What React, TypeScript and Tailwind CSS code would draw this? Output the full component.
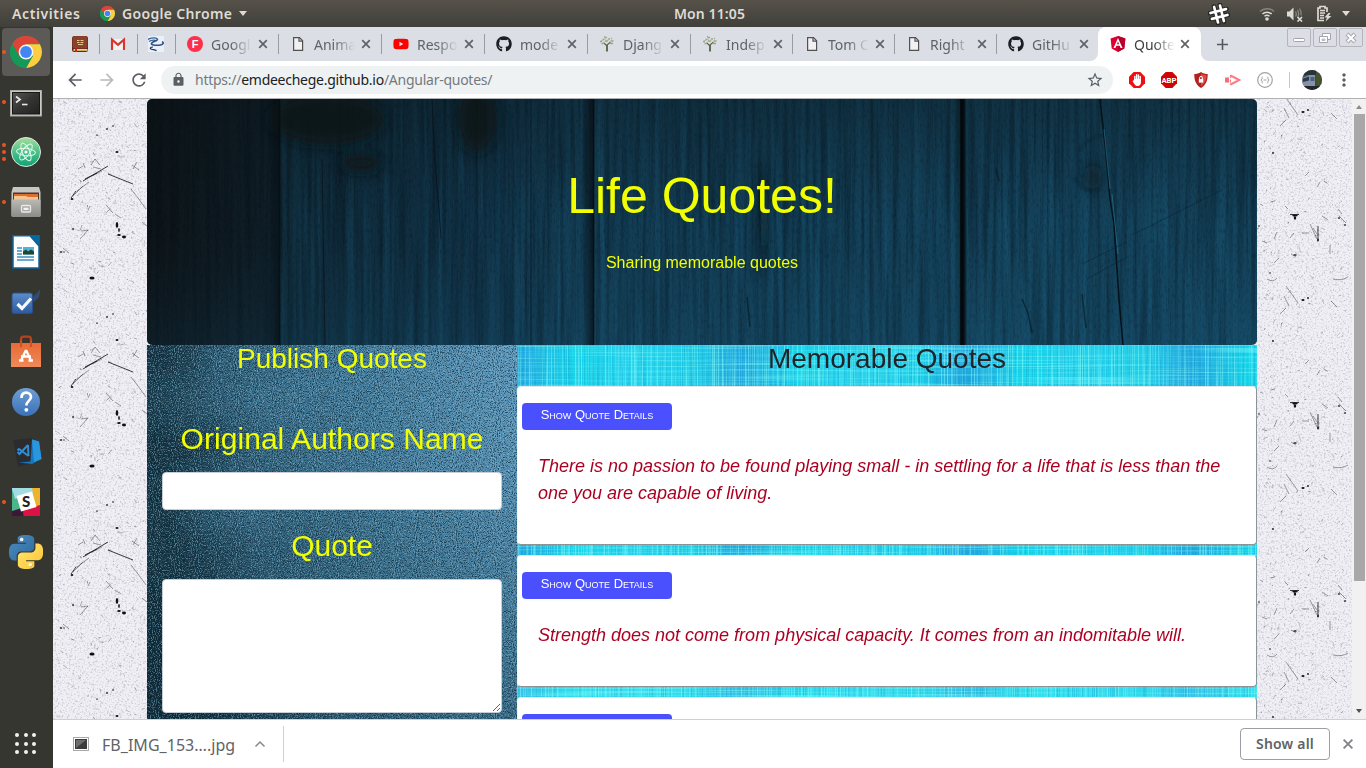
import React from "react";
import { FaGithub, FaYoutube } from "react-icons/fa";
import {
  MdAdd,
  MdArrowBack,
  MdArrowForward,
  MdLock,
  MdMoreVert,
  MdRefresh,
  MdStarBorder,
} from "react-icons/md";

/* ---------- small drawings ---------- */

function CloseIcon({ size, color }: { size: number; color: string }) {
  return (
    <svg width={size} height={size} viewBox="0 0 14 14" className="shrink-0">
      <path d="M3.200 3.200l7.600 7.600M10.800 3.200l-7.600 7.600" stroke={color} strokeWidth="1.700" fill="none" />
    </svg>
  );
}

function ChromeLogo({ size }: { size: number }) {
  return (
    <svg width={size} height={size} viewBox="0 0 32 32">
      <circle cx="16" cy="16" r="16" fill="#159957" />
      <path d="M16 16 L9.2 20 L2.1 8 A16 16 0 0 1 29.9 8 L16 8.2 Z" fill="#db4437" />
      <path d="M16 8.2 H29.9 A16 16 0 0 1 16 32 L22.8 20 Z" fill="#ffcd40" />
      <path d="M2.1 8 A16 16 0 0 0 16 32 L22.8 20 H9.2 Z" fill="#159957" />
      <circle cx="16" cy="16" r="7.4" fill="#f4f4f4" />
      <circle cx="16" cy="16" r="5.9" fill="#4285f4" />
    </svg>
  );
}

function BookIcon() {
  return (
    <svg width="16" height="16" viewBox="0 0 16 16">
      <rect x="0" y="0" width="16" height="16" rx="2.5" fill="#5f2617" />
      <rect x="0.5" y="0" width="15" height="12.5" rx="2" fill="#8a402a" />
      <path d="M1.5 13h14v1.800h-14z" fill="#e9d77a" />
      <path d="M3 12.500h2V16H3z" fill="#e21b1b" />
      <path d="M5 4.500h2.500M8.500 4.500h3M5 6.500h2.500M8.500 6.500h3M6 8.500h5" stroke="#e2c98e" strokeWidth="1.2" />
    </svg>
  );
}

function GmailIcon() {
  return (
    <svg width="16" height="16" viewBox="0 0 16 16">
      <path d="M1 3h14v11H1z" fill="#f3f1f1" />
      <path d="M2 14V3.600L8 8.800l6-5.200V14" fill="none" stroke="#d9352b" strokeWidth="2.1" />
    </svg>
  );
}

function SwirlIcon() {
  return (
    <svg width="16" height="16" viewBox="0 0 16 16">
      <rect width="16" height="16" fill="#eaf0fa" />
      <path d="M0 3.300C4 1.500 7 1.200 9.500 2.800M1 5.500c3-2 6-1.500 8-.5" fill="none" stroke="#37618f" strokeWidth="1.300" />
      <path d="M9.500 3C10 5 4 5.500 3.500 7.500s6 2 9 1.500 3.500-2.500 1.500-3.200" fill="none" stroke="#2c5282" strokeWidth="1.600" />
      <path d="M5 11c-3 0-3.500 1.700-1.500 2.300s3.500.3 5 1.500" fill="none" stroke="#17375f" strokeWidth="1.200" />
    </svg>
  );
}

function FIcon() {
  return (
    <svg width="16" height="16" viewBox="0 0 16 16">
      <circle cx="8" cy="8" r="8" fill="#fd2f4b" />
      <text x="8" y="12" textAnchor="middle" fontFamily="Liberation Sans, sans-serif" fontWeight="700" fontSize="11" fill="#fff">F</text>
    </svg>
  );
}

function PageIcon() {
  return (
    <svg width="16" height="16" viewBox="0 0 16 16">
      <path d="M3.600 1.600H9.500L12.600 4.800V14.400H3.600z" fill="#f1f1f3" stroke="#525252" strokeWidth="1.200" />
      <path d="M9 1.500V5.200h3.700" fill="none" stroke="#525252" strokeWidth="1.200" />
    </svg>
  );
}

function TreeIcon() {
  return (
    <svg width="16" height="16" viewBox="0 0 16 16">
      <path d="M7.600 15.500V8.500M8.400 15.500V8.500M8 10L4.500 6.500M8 9l3.500-3" stroke="#5c6748" strokeWidth="1.100" fill="none" />
      <path d="M1 5.500h2M3.500 3.500h2M6 1.500h2M9 3h2M11.500 5h3M6 5h3M2.500 7.500h2M11 7.500h3M5 .8h1M12 2.500h1" stroke="#9aa884" strokeWidth="1.500" fill="none" />
      <path d="M2 4.500h2M5 3h2M8 4h2M11 6h2M4 6.300h2" stroke="#b5bda4" strokeWidth="1.200" fill="none" />
    </svg>
  );
}

function AngularIcon() {
  return (
    <svg width="16" height="16" viewBox="0 0 16 16">
      <path d="M8 0l7.400 2.600-1.100 9.800L8 16l-6.300-3.600L.6 2.600z" fill="#dd0031" />
      <path d="M8 0v16l6.300-3.600 1.100-9.800z" fill="#b9002d" />
      <path d="M8 2L3.500 12h1.900l.9-2.200h3.400l.9 2.200h1.900zM8 5.500l1.100 2.700H6.900z" fill="#fff" fillRule="evenodd" />
    </svg>
  );
}

function HashIcon() {
  return (
    <svg width="22" height="22" viewBox="0 0 22 22">
      <g transform="rotate(-14 11 11)" strokeLinecap="round" fill="none">
        <path d="M8 2.500v17M14 2.500v17M2.500 8h17M2.500 14h17" stroke="#252522" strokeWidth="4.600" />
        <path d="M8 3v16M14 3v16M3 8h16M3 14h16" stroke="#fff" strokeWidth="2.700" />
      </g>
    </svg>
  );
}

function WifiIcon() {
  return (
    <svg width="16" height="16" viewBox="0 0 16 16">
      <g fill="none" strokeWidth="1.500">
        <path d="M1 5.500a10 10 0 0 1 14 0" stroke="#87857d" />
        <path d="M3.400 8a6.600 6.600 0 0 1 9.200 0M5.500 10.300a3.800 3.800 0 0 1 5 0" stroke="#dedbd2" />
      </g>
      <circle cx="8" cy="13" r="1.800" fill="#dedbd2" />
    </svg>
  );
}

function SpeakerIcon() {
  return (
    <svg width="18" height="16" viewBox="0 0 18 16">
      <path d="M1 5.500h2.500L7.500 1.500v13L3.500 10.500H1z" fill="#dedbd2" />
      <path d="M9.500 5.500c1 1.500 1 3.500 0 5M11.500 4c1.500 2.500 1.500 5 0 7M13.500 2.500c2 3 2 5 1.500 7" fill="none" stroke="#8e8c84" strokeWidth="1.200" />
      <path d="M11.500 11l4.500 4.500M16 11l-4.500 4.500" stroke="#dedbd2" strokeWidth="1.700" />
    </svg>
  );
}

function BatteryIcon() {
  return (
    <svg width="16" height="17" viewBox="0 0 16 17">
      <path d="M8 15.500H2V3h2V1.500h5V3h2v4" fill="none" stroke="#dedbd2" strokeWidth="1.700" />
      <path d="M4 5.500h5M4 8h5M4 10.500h4M4 13h4" stroke="#dedbd2" strokeWidth="1.500" />
      <path d="M12.500 8L8.500 12.500h2.500L9.500 16.500 15.500 11h-3l2-3z" fill="#dedbd2" />
    </svg>
  );
}

function HandIcon() {
  return (
    <svg width="16" height="16" viewBox="0 0 16 16">
      <path d="M4.700 0h6.600L16 4.700v6.600L11.300 16H4.700L0 11.300V4.700z" fill="#ef0f12" />
      <path d="M5.800 9V4.500M7.600 8V2.800M9.400 8V3M11.200 9V4.500" stroke="#fff" strokeWidth="1.400" strokeLinecap="round" />
      <path d="M5.100 7h6.800v3.500c0 2-1 3-2.500 3.500H7.500C6 13.500 4.500 11 3.500 9l1-.5z" fill="#fff" />
    </svg>
  );
}

function AbpIcon() {
  return (
    <svg width="16" height="16" viewBox="0 0 16 16">
      <path d="M4.700 0h6.600L16 4.700v6.600L11.300 16H4.700L0 11.300V4.700z" fill="#cf0505" />
      <text x="8" y="11" textAnchor="middle" fontFamily="Roboto, sans-serif" fontWeight="700" fontSize="7.800" fill="#fff">ABP</text>
    </svg>
  );
}

function ShieldIcon() {
  return (
    <svg width="14" height="16" viewBox="0 0 14 16">
      <path d="M7 0c2 1.500 4.500 2 6.700 2 0 6-1.200 10.500-6.700 14C1.500 12.500.3 8 .3 2 2.500 2 5 1.500 7 0z" fill="#b3201f" />
      <path d="M7 1.500c2 1 3.500 1.500 5.500 1.700C12.300 8 11 11.500 7 14.300z" fill="#dc4a45" />
      <path d="M4.800 7h4.400v3.600H4.800z" fill="#fff" />
      <path d="M5.600 7V5.800a1.400 1.400 0 0 1 2.800 0V7" fill="none" stroke="#fff" strokeWidth="1" />
    </svg>
  );
}

function CastIcon() {
  return (
    <svg width="16" height="14" viewBox="0 0 16 14">
      <path d="M0 4.500h4v5H0z" fill="#fb6a75" />
      <path d="M5.500 2.500l9 4.500-9 4.500" fill="none" stroke="#fb7b84" strokeWidth="2" />
      <path d="M5.500 2v10" stroke="#fb7b84" strokeWidth="1.200" strokeDasharray="3 1.500" />
    </svg>
  );
}

function BracesIcon() {
  return (
    <svg width="16" height="16" viewBox="0 0 16 16" fill="none" stroke="#a2a2a2">
      <circle cx="8" cy="8" r="7.300" strokeWidth="1.200" />
      <path d="M6 5c-1.300 0-1 .8-1 1.700S4.500 8 3.800 8c.7 0 1.200.4 1.200 1.300S4.700 11 6 11M10 5c1.300 0 1 .8 1 1.700S11.500 8 12.200 8c-.7 0-1.200.4-1.200 1.300s.3 1.700-1 1.700M6.500 8h3" />
    </svg>
  );
}

function AvatarIcon() {
  return (
    <svg width="20" height="20" viewBox="0 0 20 20">
      <defs>
        <clipPath id="avatarClip"><circle cx="10" cy="10" r="10" /></clipPath>
      </defs>
      <g clipPath="url(#avatarClip)">
        <rect width="20" height="20" fill="#3d4b3f" />
        <path d="M0 0h14v5H0z" fill="#27343a" />
        <path d="M0 8l7-3h6v12H1z" fill="#8593a8" />
        <path d="M1 8.500l6-2v4L1 12z" fill="#2c3b50" />
        <path d="M8.500 7h4v4h-4z" fill="#4d6079" />
        <path d="M14 3h6v12h-6z" fill="#46532e" />
        <path d="M0 16h20v4H0z" fill="#23262a" />
      </g>
    </svg>
  );
}

/* ---------- dock icons ---------- */

function TerminalIcon() {
  return (
    <svg width="34" height="30" viewBox="0 0 34 30" className="relative top-px">
      <defs>
        <linearGradient id="term" x1="0" y1="0" x2="1" y2="1">
          <stop offset="0" stopColor="#565654" /><stop offset=".5" stopColor="#343433" /><stop offset="1" stopColor="#222" />
        </linearGradient>
      </defs>
      <rect x="1.500" y="2.500" width="31" height="25.500" fill="#c9c9c7" stroke="#a8a8a4" />
      <rect x="3.500" y="4.500" width="27" height="21.500" fill="url(#term)" stroke="#171717" />
      <path d="M7 8.500l4 3-4 3" fill="none" stroke="#e9e9e9" strokeWidth="1.700" />
      <path d="M13 16.500h5.500" stroke="#e9e9e9" strokeWidth="1.600" />
    </svg>
  );
}

function AtomIcon() {
  return (
    <svg width="32" height="32" viewBox="0 0 32 32">
      <defs>
        <linearGradient id="atomg" x1="0" y1="0" x2="0" y2="1">
          <stop offset="0" stopColor="#a6dd9d" /><stop offset=".5" stopColor="#4cc08a" /><stop offset="1" stopColor="#0da477" />
        </linearGradient>
      </defs>
      <circle cx="16" cy="16" r="14.500" fill="url(#atomg)" stroke="#dfeadd" strokeWidth="1" />
      <g fill="none" stroke="#e6f8ed" strokeWidth="1">
        <ellipse cx="16" cy="16" rx="9.500" ry="3.700" transform="rotate(6 16 16)" />
        <ellipse cx="16" cy="16" rx="9.500" ry="3.700" transform="rotate(66 16 16)" />
        <ellipse cx="16" cy="16" rx="9.500" ry="3.700" transform="rotate(126 16 16)" />
      </g>
      <circle cx="16" cy="16" r="1.600" fill="#fff" />
    </svg>
  );
}

function FilesIcon() {
  return (
    <svg width="32" height="34" viewBox="0 0 32 34">
      <defs>
        <linearGradient id="filesg" x1="0" y1="0" x2="0" y2="1">
          <stop offset="0" stopColor="#b9b9b6" /><stop offset="1" stopColor="#8b8b88" />
        </linearGradient>
      </defs>
      <path d="M3 2h26l1.500 5v24h-29V7z" fill="#c6c6c3" />
      <rect x="3" y="7.500" width="26" height="8" fill="#4a3a2e" />
      <path d="M4 9h24v7H4z" fill="#e06c2f" />
      <path d="M4 11h12l2 1h10v4H4z" fill="#f6c594" />
      <rect x="1.500" y="14.500" width="29" height="17.500" rx="1" fill="url(#filesg)" />
      <rect x="11.500" y="20.500" width="9" height="6.500" rx="1" fill="#a8a8a5" stroke="#e9e9e9" strokeWidth="1.300" />
      <rect x="13.500" y="22.700" width="5" height="2.300" fill="#f3f3f3" />
    </svg>
  );
}

function WriterIcon() {
  return (
    <svg width="28" height="34" viewBox="0 0 28 34">
      <path d="M1 .8h17L27 11v22H1z" fill="#fdfdfd" stroke="#0e639c" strokeWidth="1.500" />
      <path d="M17.500 0h10.300v10.500z" fill="#0369a3" />
      <path d="M5 13h5M5 16h5M5 19h5M5 22h17M5 25h17" stroke="#3c8fc0" strokeWidth="1.600" />
      <rect x="11" y="12" width="11" height="7.500" fill="#4fb3e0" />
      <path d="M11 19.500v-3l3-2 2 2 3-2 3 2v3z" fill="#24452c" />
    </svg>
  );
}

function TaskIcon() {
  return (
    <svg width="32" height="28" viewBox="0 0 32 28">
      <defs>
        <linearGradient id="taskg" x1="0" y1="0" x2="0" y2="1">
          <stop offset="0" stopColor="#5c8cc9" /><stop offset="1" stopColor="#2d5a9e" />
        </linearGradient>
      </defs>
      <rect x="2" y="5" width="20.500" height="20.500" rx="2" fill="url(#taskg)" stroke="#27508d" />
      <path d="M22 10l8.500-9-1.500 8-5 5z" fill="#31527f" opacity=".8" />
      <path d="M7.500 16l4.500 4.500 9-10" fill="none" stroke="#f5f8fc" strokeWidth="3.200" />
    </svg>
  );
}

function SoftwareIcon() {
  return (
    <svg width="32" height="34" viewBox="0 0 32 34">
      <defs>
        <linearGradient id="softg" x1="0" y1="0" x2="0" y2="1">
          <stop offset="0" stopColor="#e86a36" /><stop offset="1" stopColor="#ef8a58" />
        </linearGradient>
      </defs>
      <path d="M11 12V4.500c0-2 1-2.800 2.500-2.800h5c1.500 0 2.500.8 2.500 2.800V12" fill="none" stroke="#b8421c" strokeWidth="2.300" />
      <path d="M1 8h30v24H1z" fill="url(#softg)" />
      <path d="M11 12V5.500M21 12V5.500" stroke="#cf5223" strokeWidth="2" />
      <g fill="none" stroke="#fff" strokeWidth="2.300">
        <path d="M16 15l-4.500 9.500M16 15l4.500 9.500M11 21.500h10" />
        <path d="M9 25.500h4.500M18.500 25.500H23" />
      </g>
    </svg>
  );
}

function HelpIcon() {
  return (
    <svg width="30" height="30" viewBox="0 0 30 30">
      <defs>
        <linearGradient id="helpg" x1="0" y1="0" x2="0" y2="1">
          <stop offset="0" stopColor="#6f9ed4" /><stop offset="1" stopColor="#3a72b8" />
        </linearGradient>
      </defs>
      <circle cx="15" cy="15" r="14" fill="url(#helpg)" />
      <path d="M10.500 11c0-3.500 2-5.300 4.700-5.300s4.800 1.700 4.800 4.400c0 3.300-4.600 4-4.600 8.400" fill="none" stroke="#fff" strokeWidth="2.700" />
      <circle cx="15.300" cy="22.800" r="1.900" fill="#fff" />
    </svg>
  );
}

function CodeIcon() {
  return (
    <svg width="32" height="32" viewBox="0 0 32 32">
      <path d="M3 4l19-2 6 24-20 4.500z" fill="#2c2c30" />
      <path d="M22 3.500l7 2 2.500 17.500-9.500 5-13-1.500 11.500-1z" fill="#1577c0" />
      <path d="M22 3.500l7 2 2.500 17.500-7.500 3z" fill="#2a96dd" />
      <path d="M18 9L9.500 18l-2-2M18.500 20L9 13l-1.500 1.500M18 9l.5 11" fill="none" stroke="#2a8fd6" strokeWidth="2" />
    </svg>
  );
}

function SlackIcon() {
  return (
    <svg width="28" height="28" viewBox="0 0 28 28">
      <rect width="28" height="28" fill="#78c6d9" />
      <path d="M0 3l5 3 5 15-10 2z" fill="#4bb68b" />
      <path d="M19 0h9v20l-8 0z" fill="#ecb32d" />
      <path d="M10 22l18-5v11H12z" fill="#dd1144" />
      <path d="M0 23l10-3 2 8H0z" fill="#3d1836" />
      <path d="M0 0h20l1 5L3 11z" fill="#a4dce4" />
      <path d="M4.500 8l15.500-4.500L24.500 19 9 23.500z" fill="#fff" />
      <text x="14.200" y="18.700" textAnchor="middle" fontFamily="Lato, sans-serif" fontWeight="900" fontSize="15" fill="#222">S</text>
    </svg>
  );
}

function PythonIcon() {
  return (
    <svg width="34" height="34" viewBox="0 0 24 24">
      <defs>
        <linearGradient id="pyb" x1="0" y1="0" x2="1" y2="1"><stop offset="0" stopColor="#4a8cc5" /><stop offset="1" stopColor="#306998" /></linearGradient>
        <linearGradient id="pyy" x1="0" y1="0" x2="1" y2="1"><stop offset="0" stopColor="#ffe873" /><stop offset="1" stopColor="#ffc331" /></linearGradient>
      </defs>
      <path fill="url(#pyb)" d="M14.250.18l.9.2.73.26.59.3.45.32.34.34.25.34.16.33.1.3.04.26.02.2-.01.13V8.500l-.05.63-.13.55-.21.46-.26.38-.3.31-.33.25-.35.19-.35.14-.33.1-.3.07-.26.04-.21.02H8.770l-.69.05-.59.14-.5.22-.41.27-.33.32-.27.35-.2.36-.15.37-.1.35-.07.32-.04.27-.02.21v3.060H3.170l-.21-.03-.28-.07-.32-.12-.35-.18-.36-.26-.36-.36-.35-.46-.32-.59-.28-.73-.21-.88-.14-1.050-.05-1.230.06-1.220.16-1.040.24-.87.32-.71.36-.57.4-.44.42-.33.42-.24.4-.16.36-.1.32-.05.24-.01h.16l.06.01h8.160v-.83H6.180l-.01-2.750-.02-.37.05-.34.11-.31.17-.28.25-.26.31-.23.38-.2.44-.18.51-.15.58-.12.64-.1.71-.06.77-.04.84-.02 1.270.05zm-6.300 1.980l-.23.33-.08.41.08.41.23.34.33.22.41.09.41-.09.33-.22.23-.34.08-.41-.08-.41-.23-.33-.33-.22-.41-.09-.41.09z" />
      <path fill="url(#pyy)" d="M21.100 6.110l.28.06.32.12.35.18.36.27.36.35.35.47.32.59.28.73.21.88.14 1.040.05 1.230-.06 1.230-.16 1.040-.24.86-.32.71-.36.57-.4.45-.42.33-.42.24-.4.16-.36.09-.32.05-.24.02-.16-.01h-8.220v.82h5.840l.01 2.760.02.36-.05.34-.11.31-.17.29-.25.25-.31.24-.38.2-.44.17-.51.15-.58.13-.64.09-.71.07-.77.04-.84.01-1.270-.04-1.070-.14-.9-.2-.73-.25-.59-.3-.45-.33-.34-.34-.25-.34-.16-.33-.1-.3-.04-.25-.02-.2.01-.13v-5.340l.05-.64.13-.54.21-.46.26-.38.3-.32.33-.24.35-.2.35-.14.33-.1.3-.06.26-.04.21-.02.13-.01h5.840l.69-.05.59-.14.5-.21.41-.28.33-.32.27-.35.2-.36.15-.36.1-.35.07-.32.04-.28.02-.21V6.070h2.090l.14.01zm-6.470 14.250l-.23.33-.08.41.08.41.23.33.33.23.41.08.41-.08.33-.23.23-.33.08-.41-.08-.41-.23-.33-.33-.23-.41-.08-.41.08z" />
      <circle cx="8.900" cy="3.100" r="1.300" fill="#e8f1f8" />
      <circle cx="15.100" cy="20.900" r="1.300" fill="#fff6d0" />
    </svg>
  );
}

/* ---------- textures ---------- */

function rng(seed: number) {
  let s = seed;
  return () => {
    s = (s * 1664525 + 1013904223) % 4294967296;
    return s / 4294967296;
  };
}

function specks(seed: number, count: number) {
  const r = rng(seed);
  return Array.from({ length: count }, () => {
    const x = r() * 94;
    const y = r() * 188;
    const a = r() * Math.PI;
    const l = 0.6 + r() * r() * r() * 9;
    return { x, y, dx: Math.cos(a) * l, dy: Math.sin(a) * l, o: 0.15 + r() * r() * 0.6 };
  });
}

const leftBold = "M18 99l5-7M30 82l15-9 10-6M32 80l12-6M55 75l25 10";
const leftMarks =
  "M20 97l10-10M24 92l12-9M39 77l10-5M78 90l7 9 8 11M53 106l7 8M62 115l6 4M27 140l8-9M28 132l7-1M10 149l6 5M89 123l5 4M80 70l4-7M79 66l7 5M38 66l4-6 5 6M40 68l8 2M25 70l5-3M30 64l2 5M35 111l2-4";
const leftBlobs: [number, number, number, number][] = [
  [64, 126, 1.3, 3], [66, 131, 0.8, 2], [66, 136, 1.8, 0.9], [71, 138, 2, 1.4], [8, 153, 1.4, 0.8], [11, 153, 0.7, 0.7],
  [39, 179, 2.600, 1.600], [64, 53, 1.500, 0.900], [54, 30, 1.200, 0.700], [60, 27, 0.600, 1], [44, 36, 1.200, 0.600], [19, 100, 1.300, 1], [20, 130, 0.700, 1.300],
];
const rightBold = "M61 127v15M33 115.500h9";
const rightMarks =
  "M53 125l7 15M56 129l4 6M65 117l6 4M81 110l4 5M82 117l4 4 3 3M17 140l3-7M33 139l4-5M45 134h7M73 146v9M76 180q9 2 15-2M29 187l12 17M27 197l5 10M23 215l6-6M28 107l3 3M17 164l5-5M34 155l5 3M10 180q6 4 10-1M60 88l3-5M48 77l4-4M5 142l5 2M74 202l6 6";
const rightBlobs: [number, number, number, number][] = [
  [38, 116.5, 2.800, 1], [38, 119, 1.200, 1.800], [61, 141, 0.800, 1.500], [2, 127, 0.800, 0.700], [13, 174, 0.800, 0.700], [46, 201, 1.600, 1.100], [51, 199, 0.900, 0.900],
  [88, 126, 1.200, 0.700], [82, 119, 0.800, 1.100], [38, 156, 1.800, 0.700], [16, 242, 0.900, 0.900],
];

function Paper({ side }: { side: "left" | "right" }) {
  const left = side === "left";
  const marks = left ? leftMarks : rightMarks;
  const bold = left ? leftBold : rightBold;
  const blobs = left ? leftBlobs : rightBlobs;
  const dots = specks(left ? 7 : 91, 380);
  const f = "paper-" + side;
  return (
    <svg width="95" height="620" viewBox="0 0 95 620" className="block shrink-0">
      <defs>
        <filter id={f} x="0" y="0" width="100%" height="100%" colorInterpolationFilters="sRGB">
          <feTurbulence type="fractalNoise" baseFrequency="0.55" numOctaves="3" seed={left ? 3 : 8} />
          <feColorMatrix values="0 0 0 0 0.45  0 0 0 0 0.44  0 0 0 0 0.5  1.6 0 0 0 -0.8" />
        </filter>
      </defs>
      <rect width="95" height="620" fill="#f1eff6" />
      <rect width="95" height="620" filter={`url(#${f})`} opacity=".6" />
      {[-188, 0, 188, 376, 564].map((o) => (
        <g key={o} transform={`translate(0 ${o})`}>
          {dots.map((d, i) => (
            <path key={i} d={`M${d.x} ${d.y}l${d.dx} ${d.dy}`} stroke="#222" strokeWidth=".7" opacity={d.o} />
          ))}
          <path d={marks} fill="none" stroke="#1b1b1f" strokeWidth=".7" opacity=".6" />
          <path d={bold} fill="none" stroke="#1b1b1f" strokeWidth="1" opacity=".85" />
          {blobs.map((b, i) => (
            <ellipse key={i} cx={b[0]} cy={b[1]} rx={b[2]} ry={b[3]} fill="#111" />
          ))}
        </g>
      ))}
    </svg>
  );
}

function Wood() {
  return (
    <svg width="1110" height="246" viewBox="0 0 1110 246" className="absolute inset-0">
      <defs>
        <linearGradient id="woodx">
          <stop offset="0" stopColor="#0e1519" /><stop offset=".115" stopColor="#10202a" /><stop offset=".125" stopColor="#102c3b" />
          <stop offset=".3" stopColor="#113348" /><stop offset=".39" stopColor="#144058" /><stop offset=".5" stopColor="#133e56" />
          <stop offset=".8" stopColor="#15455f" /><stop offset="1" stopColor="#15455f" />
        </linearGradient>
        <linearGradient id="woody" x1="0" y1="0" x2="0" y2="1">
          <stop offset="0" stopColor="#0a1114" stopOpacity=".36" /><stop offset=".5" stopColor="#0a1114" stopOpacity=".04" /><stop offset="1" stopColor="#1c6a90" stopOpacity=".12" />
        </linearGradient>
        <linearGradient id="plank"><stop offset="0" stopColor="#071015" stopOpacity="0" /><stop offset=".8" stopColor="#060b0e" stopOpacity=".75" /><stop offset=".9" stopColor="#04080a" /><stop offset="1" stopColor="#071015" stopOpacity="0" /></linearGradient>
        <filter id="grainD" x="0" y="0" width="100%" height="100%" colorInterpolationFilters="sRGB">
          <feTurbulence type="fractalNoise" baseFrequency="0.22 0.006" numOctaves="3" seed="12" />
          <feColorMatrix values="0 0 0 0 0.02  0 0 0 0 0.06  0 0 0 0 0.09  2.8 0 0 0 -1.2" />
        </filter>
        <filter id="grainL" x="0" y="0" width="100%" height="100%" colorInterpolationFilters="sRGB">
          <feTurbulence type="fractalNoise" baseFrequency="0.12 0.004" numOctaves="3" seed="31" />
          <feColorMatrix values="0 0 0 0 0.12  0 0 0 0 0.42  0 0 0 0 0.56  2 0 0 0 -0.95" />
        </filter>
        <filter id="grainF" x="0" y="0" width="100%" height="100%" colorInterpolationFilters="sRGB">
          <feTurbulence type="fractalNoise" baseFrequency="0.6 0.2" numOctaves="2" seed="4" />
          <feColorMatrix values="0 0 0 0 0  0 0 0 0 0.03  0 0 0 0 0.05  2.5 0 0 0 -1.2" />
        </filter>
        <filter id="soft" x="-50%" y="-50%" width="200%" height="200%"><feGaussianBlur stdDeviation="7" /></filter>
      </defs>
      <rect width="1110" height="246" fill="url(#woodx)" />
      <rect x="133" width="977" height="246" filter="url(#grainL)" opacity=".4" />
      <rect width="1110" height="246" filter="url(#grainD)" opacity=".36" />
      <rect width="1110" height="246" filter="url(#grainF)" opacity=".22" />
      <rect width="1110" height="246" fill="url(#woody)" />
      <g fill="#0d1417" filter="url(#soft)" opacity=".85">
        <ellipse cx="180" cy="20" rx="58" ry="26" />
        <ellipse cx="214" cy="64" rx="22" ry="9" />
        <ellipse cx="330" cy="20" rx="20" ry="34" />
        <ellipse cx="617" cy="120" rx="5" ry="60" opacity=".6" />
        <ellipse cx="946" cy="78" rx="9" ry="13" opacity=".6" />
      </g>
      <rect x="122" width="12" height="246" fill="url(#plank)" opacity=".75" />
      <rect x="434" width="14" height="246" fill="url(#plank)" opacity=".85" />
      <rect x="808" width="12" height="246" fill="url(#plank)" />
      <path d="M815 0v246" stroke="#04090c" strokeWidth="3.500" />
      <path d="M819 0v246" stroke="#1e5c79" strokeWidth="1" opacity=".6" />
      <path d="M285 0q2 60 7 110l2 30M384 0v246M175 60l3 186" fill="none" stroke="#061015" strokeWidth="1" opacity=".65" />
      <path d="M953 0l6 55 4 45 4 25 3 45 2 30 4 46" fill="none" stroke="#04121a" strokeWidth="1.500" />
      <path d="M957 30l6 60M965 95l6 60" fill="none" stroke="#2b7996" strokeWidth="1" opacity=".6" />
      <path d="M935 165l45-22M985 136l90-45M940 180l40-22" stroke="#0a2230" strokeWidth="1" opacity=".5" />
      <path d="M927 78q10 18 27 12M932 52q8-14 24-16" fill="none" stroke="#0b2633" strokeWidth="4" opacity=".35" />
      <path d="M849 70l3 12M875 200l6 14 4 20M600 198l3 30M935 195l4 34" stroke="#08151c" strokeWidth="1.500" opacity=".6" fill="none" />
    </svg>
  );
}

function Denim() {
  return (
    <svg width="370" height="374" viewBox="0 0 370 374" className="absolute inset-0">
      <defs>
        <linearGradient id="denimx" x1="0" y1=".3" x2="1" y2="0">
          <stop offset="0" stopColor="#183644" /><stop offset=".22" stopColor="#326079" /><stop offset=".55" stopColor="#427a99" /><stop offset="1" stopColor="#629dc2" />
        </linearGradient>
        <linearGradient id="denimy" x1="0" y1="0" x2="0" y2="1">
          <stop offset=".3" stopColor="#12303f" stopOpacity="0" /><stop offset="1" stopColor="#12303f" stopOpacity=".3" />
        </linearGradient>
        <filter id="denimD" x="0" y="0" width="100%" height="100%" colorInterpolationFilters="sRGB">
          <feTurbulence type="fractalNoise" baseFrequency="0.95 0.8" numOctaves="2" seed="5" />
          <feColorMatrix values="0 0 0 0 0.03  0 0 0 0 0.12  0 0 0 0 0.17  4 0 0 0 -1.85" />
        </filter>
        <filter id="denimL" x="0" y="0" width="100%" height="100%" colorInterpolationFilters="sRGB">
          <feTurbulence type="fractalNoise" baseFrequency="0.95 0.75" numOctaves="2" seed="19" />
          <feColorMatrix values="0 0 0 0 0.58  0 0 0 0 0.82  0 0 0 0 0.92  4 0 0 0 -1.95" />
        </filter>
        <filter id="denimBlur" x="-50%" y="-50%" width="200%" height="200%"><feGaussianBlur stdDeviation="14" /></filter>
      </defs>
      <rect width="370" height="374" fill="url(#denimx)" />
      <rect width="370" height="374" fill="url(#denimy)" />
      <g filter="url(#denimBlur)" fill="#0f2630" opacity=".65">
        <ellipse cx="25" cy="105" rx="75" ry="15" transform="rotate(-12 25 105)" />
        <ellipse cx="0" cy="10" rx="60" ry="22" />
        <ellipse cx="0" cy="340" rx="55" ry="95" />
      </g>
      <g filter="url(#denimBlur)" fill="#4a86a8" opacity=".5">
        <ellipse cx="150" cy="50" rx="70" ry="12" transform="rotate(-12 150 50)" />
        <ellipse cx="90" cy="170" rx="50" ry="12" />
      </g>
      <rect width="370" height="374" filter="url(#denimD)" opacity=".65" />
      <rect width="370" height="374" filter="url(#denimL)" opacity=".5" />
    </svg>
  );
}

function Weave() {
  return (
    <svg width="740" height="374" viewBox="0 0 740 374" className="absolute inset-0">
      <defs>
        <linearGradient id="weavex" gradientUnits="userSpaceOnUse" x1="0" y1="0" x2="225" y2="0" spreadMethod="repeat">
          <stop offset="0" stopColor="#20a6df" /><stop offset=".08" stopColor="#22b4e2" /><stop offset=".25" stopColor="#14d4ea" />
          <stop offset=".5" stopColor="#26d3ee" /><stop offset=".8" stopColor="#1ccde8" /><stop offset=".93" stopColor="#25b0e3" /><stop offset="1" stopColor="#20a6df" />
        </linearGradient>
        <linearGradient id="weavey" x1="0" y1="0" x2="0" y2="1">
          <stop offset=".6" stopColor="#5cf5f5" stopOpacity="0" /><stop offset="1" stopColor="#5cf5f5" stopOpacity=".4" />
        </linearGradient>
        <filter id="weaveV" x="0" y="0" width="100%" height="100%" colorInterpolationFilters="sRGB">
          <feTurbulence type="fractalNoise" baseFrequency="0.7 0.006" numOctaves="2" seed="2" />
          <feColorMatrix values="0 0 0 0 0.55  0 0 0 0 1  0 0 0 0 0.98  4 0 0 0 -1.9" />
        </filter>
        <filter id="weaveH" x="0" y="0" width="100%" height="100%" colorInterpolationFilters="sRGB">
          <feTurbulence type="fractalNoise" baseFrequency="0.006 0.7" numOctaves="2" seed="6" />
          <feColorMatrix values="0 0 0 0 0.55  0 0 0 0 1  0 0 0 0 0.98  4 0 0 0 -1.9" />
        </filter>
        <filter id="weaveK" x="0" y="0" width="100%" height="100%" colorInterpolationFilters="sRGB">
          <feTurbulence type="fractalNoise" baseFrequency="0.7 0.01" numOctaves="2" seed="16" />
          <feColorMatrix values="0 0 0 0 0.05  0 0 0 0 0.6  0 0 0 0 0.8  4 0 0 0 -1.9" />
        </filter>
      </defs>
      <rect width="740" height="374" fill="url(#weavex)" />
      <rect width="740" height="374" fill="url(#weavey)" />
      <rect width="740" height="374" filter="url(#weaveK)" opacity=".35" />
      <rect width="740" height="374" filter="url(#weaveV)" opacity=".5" />
      <rect width="740" height="374" filter="url(#weaveH)" opacity=".38" />
    </svg>
  );
}

/* ---------- browser and desktop ---------- */

const tabs: { title: string; icon: React.ReactNode; width: string }[] = [
  { title: "Googl", icon: <FIcon />, width: "w-[103px]" },
  { title: "Anima", icon: <PageIcon />, width: "w-[103px]" },
  { title: "Respo", icon: <FaYoutube size={16} color="#ff0000" />, width: "w-[103px]" },
  { title: "mode", icon: <FaGithub size={16} color="#1b1f23" />, width: "w-[103px]" },
  { title: "Djang", icon: <TreeIcon />, width: "w-[103px]" },
  { title: "Indep", icon: <TreeIcon />, width: "w-[102px]" },
  { title: "Tom C", icon: <PageIcon />, width: "w-[102px]" },
  { title: "Right", icon: <PageIcon />, width: "w-[102px]" },
  { title: "GitHu", icon: <FaGithub size={16} color="#1b1f23" />, width: "w-[101px]" },
];

const fade = "[mask-image:linear-gradient(to_right,black_20px,transparent_41px)]";

function TopBar() {
  return (
    <header className="flex h-[27px] shrink-0 items-center bg-linear-to-b from-[#56524a] to-[#403f3a] font-['Noto_Sans',sans-serif] text-[14px] font-semibold text-[#dfdbd2]">
      <span className="w-[89px] pl-3 tracking-[0.6px]">Activities</span>
      <span className="flex w-4 shrink-0 pl-[11px]"><span className="flex"><ChromeLogo size={15} /></span></span>
      <span className="w-[134px] pl-[17px] whitespace-nowrap tracking-[0.33px]">Google Chrome</span>
      <span className="border-x-[4.500px] border-t-[5px] border-x-transparent border-t-[#dfdbd2]" />
      <span className="ml-[427px] tracking-[0.1px]">Mon 11:05</span>
      <span className="ml-auto flex items-center pr-4">
        <HashIcon />
        <span className="ml-[29px] flex"><WifiIcon /></span>
        <span className="ml-[11px] flex"><SpeakerIcon /></span>
        <span className="ml-[12px] flex"><BatteryIcon /></span>
        <span className="ml-[10px] border-x-[4.500px] border-t-[5px] border-x-transparent border-t-[#dfdbd2]" />
      </span>
    </header>
  );
}

function Dock() {
  const items: { icon: React.ReactNode; dots: number }[] = [
    { icon: <ChromeLogo size={32} />, dots: 1 },
    { icon: <TerminalIcon />, dots: 1 },
    { icon: <AtomIcon />, dots: 3 },
    { icon: <FilesIcon />, dots: 1 },
    { icon: <WriterIcon />, dots: 0 },
    { icon: <TaskIcon />, dots: 0 },
    { icon: <SoftwareIcon />, dots: 0 },
    { icon: <HelpIcon />, dots: 0 },
    { icon: <CodeIcon />, dots: 0 },
    { icon: <SlackIcon />, dots: 1 },
    { icon: <PythonIcon />, dots: 0 },
  ];
  return (
    <nav className="flex w-[53px] shrink-0 flex-col bg-[#363631]">
      {items.map((it, i) => (
        <div key={i} className="flex h-[50px] w-[53px] items-center py-px pr-[3px] pl-[2px]">
          <div className={`flex h-12 w-12 items-center rounded-[4px] ${i === 0 ? "bg-[#5b5a56]" : ""}`}>
            <div className="flex w-1 flex-col gap-[3px]">
              {Array.from({ length: it.dots }, (_, k) => (
                <span key={k} className="h-1 w-1 rounded-full bg-[#e95420]" />
              ))}
            </div>
            <div className="flex w-10 justify-center">{it.icon}</div>
          </div>
        </div>
      ))}
      <div className="mt-auto mb-[14px] grid grid-cols-3 justify-start gap-x-[4.500px] gap-y-[4.500px] self-start pl-[15px]">
        {Array.from({ length: 9 }, (_, k) => (
          <span key={k} className="h-1 w-1 rounded-full bg-[#f2f1ef]" />
        ))}
      </div>
    </nav>
  );
}

function WinButton({ children }: { children: React.ReactNode }) {
  return (
    <span className="flex h-[19px] w-6 items-center justify-center rounded-[2px] border border-[#b3b5bd] bg-[#dcdde5]">
      <svg width="16" height="14" viewBox="0 0 16 14" fill="none">{children}</svg>
    </span>
  );
}

function TabStrip() {
  return (
    <div className="flex h-[34px] shrink-0 items-center bg-[#dcdee6] pl-[7px] font-['Noto_Sans',sans-serif] text-[14px] text-[#5f6368]">
      {[<BookIcon />, <GmailIcon />, <SwirlIcon />].map((ic, i) => (
        <div key={i} className={`flex h-5 items-center border-r border-[#9a9ca3] ${i === 0 ? "w-10 pl-3" : "w-[38px] pl-[10px]"}`}>{ic}</div>
      ))}
      {tabs.map((t, i) => (
        <div key={i} className={`flex h-5 shrink-0 items-center pl-[11px] ${t.width} ${i < 8 ? "border-r border-[#9a9ca3]" : ""}`}>
          <span className="flex w-4 shrink-0">{t.icon}</span>
          <span className={`ml-2 w-11 shrink-0 whitespace-nowrap ${fade}`}>{t.title}</span>
          <span className="ml-px flex"><CloseIcon size={14} color="#5f6368" /></span>
        </div>
      ))}
      <div className="relative flex h-[34px] w-[103px] shrink-0 items-center rounded-t-[8px] bg-white pl-3 text-[#3c4043]">
        <svg width="8" height="8" className="absolute bottom-0 -left-2"><path d="M8 0v8H0a8 8 0 0 0 8-8z" fill="#fff" /></svg>
        <svg width="8" height="8" className="absolute -right-2 bottom-0"><path d="M0 0v8h8a8 8 0 0 1-8-8z" fill="#fff" /></svg>
        <AngularIcon />
        <span className={`ml-2 w-11 shrink-0 whitespace-nowrap ${fade}`}>Quote</span>
        <CloseIcon size={14} color="#5f6368" />
      </div>
      <MdAdd size={19} className="ml-3 shrink-0 text-[#55585d]" />
      <div className="mr-[3px] ml-auto flex gap-[2px] self-start pt-px">
        <WinButton><rect x="2.500" y="7.500" width="11" height="3" rx="1" fill="#fff" stroke="#a3a5ad" /></WinButton>
        <WinButton>
          <path d="M5.500 2.500h8v6h-8z" fill="#fff" stroke="#a3a5ad" />
          <path d="M2.500 5.500h8v6h-8z" fill="#fff" stroke="#a3a5ad" /><path d="M5 8h3v1.500H5z" fill="#dcdde5" stroke="#a3a5ad" strokeWidth=".7" />
        </WinButton>
        <WinButton>
          <path d="M4 3l8 8M12 3l-8 8" stroke="#a3a5ad" strokeWidth="4" />
          <path d="M4.500 3.500l7 7M11.500 3.500l-7 7" stroke="#fff" strokeWidth="2.200" />
        </WinButton>
      </div>
    </div>
  );
}

function Toolbar() {
  return (
    <div className="flex h-[38px] shrink-0 items-center border-b border-[#b0b1b2] bg-white pl-3 text-[#5b5f64]">
      <MdArrowBack size={20} />
      <MdArrowForward size={20} className="ml-3 text-[#b9bbbd]" />
      <MdRefresh size={20} className="ml-3" />
      <div className="ml-3 flex h-7 w-[952px] items-center rounded-full bg-[#eef2f3] pr-[9px] pl-[10px]">
        <MdLock size={15} />
        <span className="ml-[9px] font-['Noto_Sans',sans-serif] text-[14px] tracking-[-0.26px] whitespace-nowrap text-[#74797e]">
          https://<span className="text-[#202124]">emdeechege.github.io</span>/Angular-quotes/
        </span>
        <MdStarBorder size={18} className="ml-auto" />
      </div>
      <span className="ml-4 flex"><HandIcon /></span>
      <span className="ml-4 flex"><AbpIcon /></span>
      <span className="ml-[17px] flex"><ShieldIcon /></span>
      <span className="ml-[17px] flex"><CastIcon /></span>
      <span className="ml-4 flex"><BracesIcon /></span>
      <span className="ml-4 h-4 w-px bg-[#c4c6c8]" />
      <span className="ml-3 flex"><AvatarIcon /></span>
      <MdMoreVert size={20} className="ml-3" />
    </div>
  );
}

/* ---------- page ---------- */

function QuoteCard({ text }: { text: string }) {
  return (
    <article className="mb-[10px] rounded-[4px] border border-t-[#e2e8ea] border-r-[#8c9396] border-b-[#8c9396] border-l-[#f3f3f3] bg-white px-1 pt-4">
      <button className="flex h-[27px] w-[150px] items-start justify-center rounded-[4px] bg-[#4b50ff] pt-[3px] text-[13px] leading-[18px] text-white [font-variant:small-caps]">
        Show Quote Details
      </button>
      <p className="px-4 pt-[23px] pb-[37px] text-[18px] leading-[27px] text-[#ab0021] italic">{text}</p>
    </article>
  );
}

function Page() {
  return (
    <div className="flex h-[620px] shrink-0 overflow-hidden font-['Liberation_Sans',sans-serif]">
      <div className="flex w-[94px] shrink-0 overflow-hidden"><Paper side="left" /></div>
      <main className="flex w-[1110px] shrink-0 flex-col overflow-hidden bg-[#f1eff6]">
        <section className="relative flex h-[246px] shrink-0 flex-col items-center overflow-hidden rounded-[5px] pt-[67px] text-[#f2ff00]">
          <Wood />
          <h1 className="relative text-[50px] leading-[60px]">Life Quotes!</h1>
          <p className="relative mt-[25px] text-[16px] leading-6">Sharing memorable quotes</p>
        </section>
        <div className="flex min-h-0 flex-1">
          <section className="relative w-[370px] shrink-0 px-[15px] text-center text-[#f2ff00]">
            <Denim />
            <div className="relative flex flex-col">
              <h2 className="h-[76px] text-[28px] leading-[28px]">Publish Quotes</h2>
              <label className="h-[51px] text-[30px] leading-9 tracking-[0.05px]">Original Authors Name</label>
              <input className="h-[38px] rounded-[4px] border border-[#c9ced6] bg-white" />
              <label className="h-[69px] pt-[18px] text-[30px] leading-9">Quote</label>
              <textarea className="h-[134px] resize rounded-[4px] border border-[#c9ced6] bg-white" />
            </div>
          </section>
          <section className="relative w-[740px] shrink-0">
            <Weave />
            <div className="relative">
              <h2 className="h-[41px] text-center text-[28px] leading-[28px] text-[#212529]">Memorable Quotes</h2>
              <QuoteCard text="There is no passion to be found playing small - in settling for a life that is less than the one you are capable of living." />
              <QuoteCard text="Strength does not come from physical capacity. It comes from an indomitable will." />
              <QuoteCard text="" />
            </div>
          </section>
        </div>
      </main>
      <div className="flex w-[95px] shrink-0 overflow-hidden"><Paper side="right" /></div>
      <div className="flex w-[14px] shrink-0 flex-col items-center bg-[#f1f1f1] py-[6px]">
        <span className="border-x-[3.500px] border-b-4 border-x-transparent border-b-[#8b8b8b]" />
        <span className="mt-[5px] h-[467px] w-[11px] bg-[#a8a8a8]" />
        <span className="mt-auto border-x-[3.500px] border-t-4 border-x-transparent border-t-[#505050]" />
      </div>
    </div>
  );
}

function DownloadBar() {
  return (
    <footer className="flex h-[49px] shrink-0 items-center border-t border-[#cfd0d3] bg-white pl-5 font-['Noto_Sans',sans-serif] text-[#5f6368]">
      <svg width="16" height="14" viewBox="0 0 16 14">
        <rect x=".5" y=".5" width="15" height="13" fill="#fff" stroke="#aaa" />
        <rect x="2" y="2" width="12" height="10" fill="#3c3c3c" /><path d="M3 3h10L3 11z" fill="#6d6d6d" />
      </svg>
      <span className="ml-[13px] w-[134px] pt-px text-[16px] tracking-[0.03px] whitespace-nowrap">FB_IMG_153….jpg</span>
      <svg width="12" height="8" viewBox="0 0 12 8" className="ml-[18px]"><path d="M1.500 6.500L6 2l4.500 4.500" fill="none" stroke="#85888c" strokeWidth="1.500" /></svg>
      <span className="ml-[17px] h-9 w-px bg-[#cfd0d3]" />
      <span className="ml-auto flex h-8 w-[90px] items-center justify-center rounded-[4px] border border-[#9b9ea3] pb-[2px] text-[14px] font-semibold tracking-[0.2px]">Show all</span>
      <span className="mr-[10px] ml-[10px] flex"><CloseIcon size={16} color="#808388" /></span>
    </footer>
  );
}

export default function App() {
  return (
    <div className="flex h-[768px] w-[1366px] flex-col overflow-hidden">
      <TopBar />
      <div className="flex min-h-0 flex-1">
        <Dock />
        <div className="flex w-[1313px] flex-col">
          <TabStrip />
          <Toolbar />
          <Page />
          <DownloadBar />
        </div>
      </div>
    </div>
  );
}
